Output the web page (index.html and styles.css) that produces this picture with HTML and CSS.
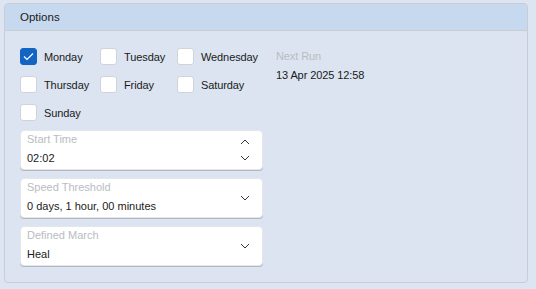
FILE: index.html
```html
<!DOCTYPE html>
<html>
<head>
<meta charset="utf-8">
<link rel="stylesheet" href="styles.css">
</head>
<body>
<div class="panel">
  <div class="panel-header">Options</div>
  <div class="panel-body">
    <div class="left">
      <div class="days">
        <label class="day"><span class="box checked"><svg width="11" height="9" viewBox="0 0 11 9"><path d="M1 4.5 L4 7.5 L10 1.5" fill="none" stroke="#fff" stroke-width="1.2"/></svg></span>Monday</label>
        <label class="day"><span class="box"></span>Tuesday</label>
        <label class="day"><span class="box"></span>Wednesday</label>
        <label class="day"><span class="box"></span>Thursday</label>
        <label class="day"><span class="box"></span>Friday</label>
        <label class="day"><span class="box"></span>Saturday</label>
        <label class="day"><span class="box"></span>Sunday</label>
      </div>
      <div class="fields">
        <div class="field">
          <div class="field-text">
            <div class="field-label">Start Time</div>
            <div class="field-value">02:02</div>
          </div>
          <div class="spin">
            <svg width="10" height="6" viewBox="0 0 10 6"><path d="M1 5 L5 1 L9 5" fill="none" stroke="#333" stroke-width="1"/></svg>
            <svg width="10" height="6" viewBox="0 0 10 6"><path d="M1 1 L5 5 L9 1" fill="none" stroke="#333" stroke-width="1"/></svg>
          </div>
        </div>
        <div class="field">
          <div class="field-text">
            <div class="field-label">Speed Threshold</div>
            <div class="field-value">0 days, 1 hour, 00 minutes</div>
          </div>
          <div class="drop">
            <svg width="10" height="6" viewBox="0 0 10 6"><path d="M1 1 L5 5 L9 1" fill="none" stroke="#333" stroke-width="1"/></svg>
          </div>
        </div>
        <div class="field">
          <div class="field-text">
            <div class="field-label">Defined March</div>
            <div class="field-value">Heal</div>
          </div>
          <div class="drop">
            <svg width="10" height="6" viewBox="0 0 10 6"><path d="M1 1 L5 5 L9 1" fill="none" stroke="#333" stroke-width="1"/></svg>
          </div>
        </div>
      </div>
    </div>
    <div class="right">
      <div class="next-label">Next Run</div>
      <div class="next-value">13 Apr 2025 12:58</div>
    </div>
  </div>
</div>
</body>
</html>
```
FILE: styles.css
```css
* { box-sizing: border-box; }
html, body {
  margin: 0;
  padding: 0;
  background: #dce5f1;
  font-family: "Liberation Sans", Arial, sans-serif;
  font-size: 11px;
  color: #1a1a1a;
}
body { padding: 3px 8px 6px 4px; }
.panel {
  height: 280px;
  border: 1px solid #c9cdd3;
  border-radius: 4px;
  background: #dbe4f0;
  overflow: hidden;
}
.panel-header {
  height: 27px;
  background: #c7d9ef;
  border-bottom: 1px solid #c9cdd3;
  padding-left: 15px;
  line-height: 26px;
  font-size: 11.5px;
  color: #1a1a1a;
}
.panel-body {
  display: flex;
  padding: 17px 0 0 15px;
}
.left { width: 243px; }
.days {
  display: grid;
  grid-template-columns: 80px 77px 86px;
  grid-auto-rows: 28px;
  letter-spacing: -0.1px;
}
.day {
  display: flex;
  align-items: flex-start;
  height: 28px;
  line-height: 19px;
}
.box {
  width: 17px;
  height: 17px;
  border: 1px solid #d0d4da;
  border-radius: 3px;
  background: #fff;
  margin-right: 7px;
  display: flex;
  align-items: center;
  justify-content: center;
  flex-shrink: 0;
}
.box.checked {
  background: #1464c4;
  border-color: #1464c4;
}
.fields {
  display: flex;
  flex-direction: column;
  gap: 8px;
  margin-top: -2px;
}
.field {
  height: 40px;
  background: #fff;
  border-radius: 4px;
  border: 1px solid #e3e6ea;
  box-shadow: 0 1px 0 #b4b8bd;
  display: flex;
  padding: 1px 12px 0 6px;
}
.field-text { flex: 1; }
.field-label {
  color: #b8bcc2;
  line-height: 15px;
}
.field-value {
  line-height: 18px;
  margin-top: 2px;
}
.spin {
  display: flex;
  flex-direction: column;
  gap: 10px;
  padding-top: 7px;
}
.drop {
  display: flex;
  align-items: center;
  margin-top: -2px;
}
.right {
  padding-left: 13px;
  padding-top: 1px;
  letter-spacing: -0.1px;
}
.next-label {
  color: #b8bcc2;
  line-height: 14px;
}
.next-value {
  margin-top: 5px;
  line-height: 14px;
}
```
